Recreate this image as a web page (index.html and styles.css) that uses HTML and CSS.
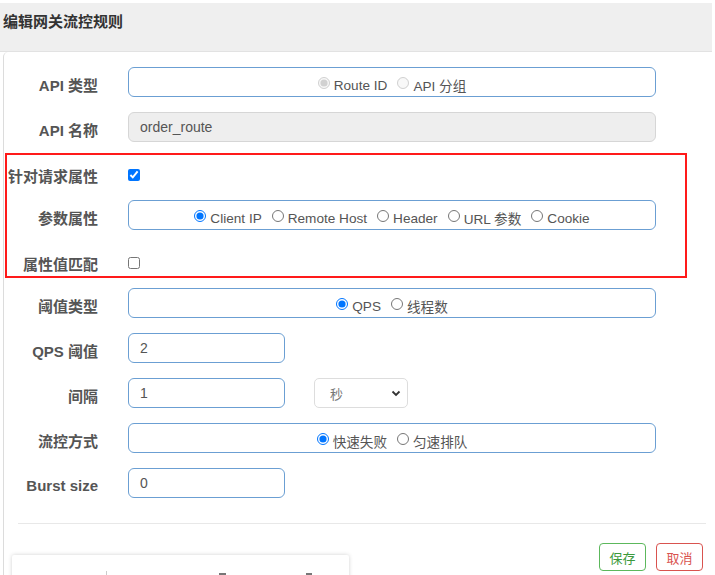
FILE: index.html
```html
<!DOCTYPE html>
<html lang="zh">
<head>
<meta charset="utf-8">
<link rel="stylesheet" href="styles.css">
</head>
<body>
<div class="header"><h4 class="title">编辑网关流控规则</h4></div>
<div class="modal">
  <div class="form">
    <div class="row">
      <label class="lbl">API 类型</label>
      <div class="box wide radios">
        <label class="opt"><input type="radio" checked disabled>Route ID</label>
        <label class="opt"><input type="radio" disabled>API 分组</label>
      </div>
    </div>
    <div class="row">
      <label class="lbl">API 名称</label>
      <div class="box wide readonly">order_route</div>
    </div>
    <div class="row check-row">
      <label class="lbl">针对请求属性</label>
      <input class="chk" type="checkbox" checked>
    </div>
    <div class="row">
      <label class="lbl">参数属性</label>
      <div class="box wide radios">
        <label class="opt"><input type="radio" name="p" checked>Client IP</label>
        <label class="opt"><input type="radio" name="p">Remote Host</label>
        <label class="opt"><input type="radio" name="p">Header</label>
        <label class="opt"><input type="radio" name="p">URL 参数</label>
        <label class="opt"><input type="radio" name="p">Cookie</label>
      </div>
    </div>
    <div class="row check-row">
      <label class="lbl">属性值匹配</label>
      <input class="chk" type="checkbox">
    </div>
    <div class="row">
      <label class="lbl">阈值类型</label>
      <div class="box wide radios">
        <label class="opt"><input type="radio" name="t" checked>QPS</label>
        <label class="opt"><input type="radio" name="t">线程数</label>
      </div>
    </div>
    <div class="row">
      <label class="lbl">QPS 阈值</label>
      <div class="box small">2</div>
    </div>
    <div class="row">
      <label class="lbl">间隔</label>
      <div class="box small">1</div>
      <div class="select">秒<svg class="caret" width="10" height="7" viewBox="0 0 10 7"><path d="M1.5 1.5 L5 5 L8.5 1.5" fill="none" stroke="#333" stroke-width="1.8"/></svg></div>
    </div>
    <div class="row">
      <label class="lbl">流控方式</label>
      <div class="box wide radios">
        <label class="opt"><input type="radio" name="c" checked>快速失败</label>
        <label class="opt"><input type="radio" name="c">匀速排队</label>
      </div>
    </div>
    <div class="row">
      <label class="lbl">Burst size</label>
      <div class="box small">0</div>
    </div>
  </div>
  <div class="sep"></div>
  <div class="footer">
    <button class="btn save">保存</button>
    <button class="btn cancel">取消</button>
  </div>
  <div class="mark"></div>
  <div class="dock">
    <span class="dock-div"></span>
    <span class="dock-t t1"></span>
    <span class="dock-t t2"></span>
  </div>
</div>
</body>
</html>
```
FILE: styles.css
```css
* { box-sizing: border-box; }
html, body { margin: 0; padding: 0; background: #fff; overflow: hidden; }
body {
  font-family: "Liberation Sans", Arial, "Noto Sans CJK SC", sans-serif;
  width: 715px;
  height: 575px;
  padding-top: 3px;
}
.header {
  width: 712px;
  height: 49px;
  background: #efefef;
  border-bottom: 1px solid #e2e2e2;
  padding: 9px 0 0 3px;
}
.title {
  margin: 0;
  font-size: 15px;
  font-weight: bold;
  color: #333;
  line-height: 20px;
}
.modal {
  position: relative;
  margin-left: 3px;
  width: 712px;
  height: 530px;
  border-left: 1px solid #dcdcdc;
  border-top-left-radius: 5px;
  background: #fff;
}
.form {
  display: flex;
  flex-direction: column;
  gap: 15px;
  padding-top: 15px;
}
.row {
  display: flex;
  align-items: center;
  height: 30px;
}
.check-row {
  height: 28px;
  padding-top: 5px;
}
.lbl {
  width: 94px;
  flex: none;
  text-align: right;
  font-size: 15px;
  font-weight: bold;
  color: #555;
  margin-right: 30px;
  white-space: nowrap;
  padding-top: 4px;
}
.check-row .chk { margin-top: 2px; }
.box {
  height: 30px;
  border: 1px solid #6b9fd3;
  border-radius: 6px;
  font-size: 14px;
  color: #555;
  display: flex;
  align-items: center;
  padding: 0 11px;
}
.wide { width: 528px; }
.small { width: 157px; }
.readonly {
  background: #eee;
  border-color: #d6d6d6;
}
.radios {
  justify-content: center;
  gap: 10px;
  padding-top: 6px;
  font-size: 13.6px;
}
.opt {
  display: inline-flex;
  align-items: center;
  white-space: nowrap;
}
.opt input {
  margin: 0 4px 4px 0;
  width: 12px;
  height: 12px;
}
.chk {
  margin: 0;
  width: 12px;
  height: 12px;
}
.select {
  margin-left: 29px;
  width: 94px;
  height: 30px;
  border: 1px solid #ddd;
  border-radius: 5px;
  display: flex;
  align-items: center;
  justify-content: space-between;
  padding: 0 6px 0 15px;
  font-size: 13px;
  color: #777;
}
.sep {
  margin: 25px 9px 0 14px;
  border-top: 1px solid #e8e8e8;
}
.footer {
  display: flex;
  justify-content: flex-end;
  gap: 10px;
  padding: 19px 12px 0 0;
}
.btn {
  width: 47px;
  height: 28px;
  border-radius: 4px;
  background: #fff;
  font-family: "Noto Sans CJK SC", sans-serif;
  font-size: 13px;
  padding: 0;
}
.save { border: 1px solid #5cb85c; color: #3c9a3c; }
.cancel { border: 1px solid #d9534f; color: #d9534f; }
.mark {
  position: absolute;
  left: 1px;
  top: 101px;
  width: 682px;
  height: 125px;
  border: 2px solid #ff1a1a;
}
.dock {
  position: absolute;
  left: 8px;
  top: 503px;
  width: 337px;
  height: 40px;
  background: #fff;
  box-shadow: 0 0 4px rgba(0,0,0,0.18);
  border-radius: 2px;
}
.dock-div {
  position: absolute;
  left: 94px;
  top: 16px;
  height: 20px;
  border-left: 1px solid #ccc;
}
.dock-t {
  position: absolute;
  top: 18px;
  height: 2px;
  width: 7px;
  background: #777;
}
.t1 { left: 207px; }
.t2 { left: 294px; width: 6px; }
```
